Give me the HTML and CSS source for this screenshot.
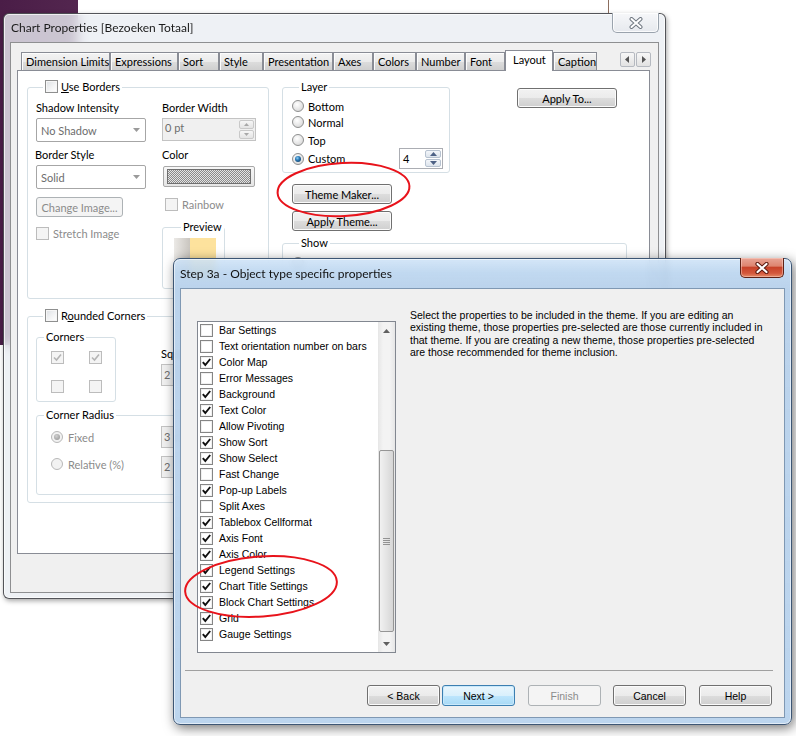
FILE: index.html
```html
<!DOCTYPE html>
<html>
<head>
<meta charset="utf-8">
<title>Chart Properties</title>
<link rel="stylesheet" href="styles.css">
</head>
<body>
<div class="wallpaper"></div>
<div class="hairline"></div>

<section class="win props">
  <header class="titlebar">
    <span class="title">Chart Properties [Bezoeken Totaal]</span>
    <span class="close inactive"><svg width="16" height="12" viewBox="0 0 16 12"><path d="M3.5 2 L12.5 10 M12.5 2 L3.5 10" stroke="#6f7780" stroke-width="4" stroke-linecap="round"/><path d="M3.5 2 L12.5 10 M12.5 2 L3.5 10" stroke="#fff" stroke-width="2" stroke-linecap="round"/></svg></span>
  </header>
  <div class="client">
    <nav class="tabs">
      <span class="tab t-dim">Dimension Limits</span>
      <span class="tab t-expr">Expressions</span>
      <span class="tab t-sort">Sort</span>
      <span class="tab t-style">Style</span>
      <span class="tab t-pres">Presentation</span>
      <span class="tab t-axes">Axes</span>
      <span class="tab t-colors">Colors</span>
      <span class="tab t-number">Number</span>
      <span class="tab t-font">Font</span>
      <span class="tab sel t-layout">Layout</span>
      <span class="tab t-caption">Caption</span>
      <span class="tabscroll">
        <span class="tsb"><svg width="5" height="7" viewBox="0 0 5 7"><path d="M4 0 L0 3.5 L4 7Z" fill="#555"/></svg></span>
        <span class="tsb"><svg width="5" height="7" viewBox="0 0 5 7"><path d="M1 0 L5 3.5 L1 7Z" fill="#555"/></svg></span>
      </span>
    </nav>
    <div class="page">
      <div class="lcol">
        <fieldset class="fs fs-borders">
          <legend><span class="cb"></span><span class="lg"><u>U</u>se Borders</span></legend>
          <div class="ub-grid">
            <div class="lbl">Shadow Intensity</div>
            <div class="lbl">Border Width</div>
            <div class="combo"><span class="ctext">No Shadow</span><svg class="carr" width="7" height="4" viewBox="0 0 7 4"><path d="M0 0 H7 L3.5 4Z" fill="#9a9a9a"/></svg></div>
            <div class="spin dis"><span class="stext">0 pt</span><span class="sbtns"><span class="sbtn"><svg width="5" height="3" viewBox="0 0 5 3"><path d="M0 3 L2.5 0 L5 3Z" fill="#a8a8a8"/></svg></span><span class="sbtn"><svg width="5" height="3" viewBox="0 0 5 3"><path d="M0 0 L2.5 3 L5 0Z" fill="#a8a8a8"/></svg></span></span></div>
            <div class="lbl">Border Style</div>
            <div class="lbl">Color</div>
            <div class="combo"><span class="ctext">Solid</span><svg class="carr" width="7" height="4" viewBox="0 0 7 4"><path d="M0 0 H7 L3.5 4Z" fill="#9a9a9a"/></svg></div>
            <div class="colorbtn"><span class="checker"></span></div>
            <div class="btn dis change-img">Change Image...</div>
            <div class="chk dis rainbow"><span class="cb dis"></span>Rainbow</div>
            <div class="chk dis"><span class="cb dis"></span>Stretch Image</div>
            <fieldset class="fs fs-preview">
              <legend><span class="lg">Preview</span></legend>
              <div class="swatch"><span class="sw-gray"></span><span class="sw-yellow"></span></div>
            </fieldset>
          </div>
        </fieldset>

        <fieldset class="fs fs-round">
          <legend><span class="cb"></span><span class="lg">R<u>o</u>unded Corners</span></legend>
          <div class="round-top">
            <fieldset class="fs fs-corners">
              <legend><span class="lg">Corners</span></legend>
              <div class="corner-grid">
                <span class="cb dis"><svg width="11" height="11" viewBox="0 0 11 11"><path d="M2 5.5 L4.5 8 L9 2.5" stroke="#b4b4b4" stroke-width="1.6" fill="none"/></svg></span>
                <span class="cb dis"><svg width="11" height="11" viewBox="0 0 11 11"><path d="M2 5.5 L4.5 8 L9 2.5" stroke="#b4b4b4" stroke-width="1.6" fill="none"/></svg></span>
                <span class="cb dis"></span>
                <span class="cb dis"></span>
              </div>
            </fieldset>
            <div class="sq">
              <div class="lbl">Squareness</div>
              <div class="edit dis">2</div>
            </div>
          </div>
          <fieldset class="fs fs-radius">
            <legend><span class="lg">Corner Radius</span></legend>
            <div class="radius-grid">
              <div class="rbl dis"><span class="rb on dis"></span>Fixed</div>
              <div class="edit dis">3 pt</div>
              <div class="rbl dis"><span class="rb dis"></span>Relative (%)</div>
              <div class="edit dis">2</div>
            </div>
          </fieldset>
        </fieldset>
      </div>

      <div class="rcol">
        <div class="layer-row">
          <fieldset class="fs fs-layer">
            <legend><span class="lg">Layer</span></legend>
            <div class="rbl r-bottom"><span class="rb"></span>Bottom</div>
            <div class="rbl r-normal"><span class="rb"></span>Normal</div>
            <div class="rbl r-top"><span class="rb"></span>Top</div>
            <div class="rbl r-custom"><span class="rb on"></span>Custom
              <div class="spin spin4"><span class="stext">4</span><span class="sbtns"><span class="sbtn"><svg width="7" height="4" viewBox="0 0 7 4"><path d="M0 4 L3.5 0 L7 4Z" fill="#4d6185"/></svg></span><span class="sbtn"><svg width="7" height="4" viewBox="0 0 7 4"><path d="M0 0 L3.5 4 L7 0Z" fill="#4d6185"/></svg></span></span></div>
            </div>
          </fieldset>
          <div class="btn apply-to">Apply To...</div>
        </div>
        <div class="btn theme-maker">Theme Maker...</div>
        <div class="btn apply-theme">Apply Theme...</div>
        <fieldset class="fs fs-show">
          <legend><span class="lg">Show</span></legend>
          <div class="r-always"><span class="rb"></span></div>
        </fieldset>
      </div>
    </div>
  </div>
</section>

<section class="win wiz">
  <header class="titlebar">
    <span class="title">Step 3a - Object type specific properties</span>
    <span class="close active"><svg width="16" height="12" viewBox="0 0 16 12"><path d="M3.5 2 L12.5 10 M12.5 2 L3.5 10" stroke="#5a1a10" stroke-width="4.2" stroke-linecap="round"/><path d="M3.5 2 L12.5 10 M12.5 2 L3.5 10" stroke="#fff" stroke-width="2.2" stroke-linecap="round"/></svg></span>
  </header>
  <div class="client">
    <div class="wiz-body">
      <div class="listbox">
        <div class="items">
          <div class="item"><span class="cb"></span>Bar Settings</div>
          <div class="item"><span class="cb"></span>Text orientation number on bars</div>
          <div class="item"><span class="cb"><svg width="11" height="11" viewBox="0 0 11 11"><path d="M1.8 5.2 L4.3 8 L9.2 2" stroke="#111" stroke-width="1.9" fill="none"/></svg></span>Color Map</div>
          <div class="item"><span class="cb"></span>Error Messages</div>
          <div class="item"><span class="cb"><svg width="11" height="11" viewBox="0 0 11 11"><path d="M1.8 5.2 L4.3 8 L9.2 2" stroke="#111" stroke-width="1.9" fill="none"/></svg></span>Background</div>
          <div class="item"><span class="cb"><svg width="11" height="11" viewBox="0 0 11 11"><path d="M1.8 5.2 L4.3 8 L9.2 2" stroke="#111" stroke-width="1.9" fill="none"/></svg></span>Text Color</div>
          <div class="item"><span class="cb"></span>Allow Pivoting</div>
          <div class="item"><span class="cb"><svg width="11" height="11" viewBox="0 0 11 11"><path d="M1.8 5.2 L4.3 8 L9.2 2" stroke="#111" stroke-width="1.9" fill="none"/></svg></span>Show Sort</div>
          <div class="item"><span class="cb"><svg width="11" height="11" viewBox="0 0 11 11"><path d="M1.8 5.2 L4.3 8 L9.2 2" stroke="#111" stroke-width="1.9" fill="none"/></svg></span>Show Select</div>
          <div class="item"><span class="cb"></span>Fast Change</div>
          <div class="item"><span class="cb"><svg width="11" height="11" viewBox="0 0 11 11"><path d="M1.8 5.2 L4.3 8 L9.2 2" stroke="#111" stroke-width="1.9" fill="none"/></svg></span>Pop-up Labels</div>
          <div class="item"><span class="cb"></span>Split Axes</div>
          <div class="item"><span class="cb"><svg width="11" height="11" viewBox="0 0 11 11"><path d="M1.8 5.2 L4.3 8 L9.2 2" stroke="#111" stroke-width="1.9" fill="none"/></svg></span>Tablebox Cellformat</div>
          <div class="item"><span class="cb"><svg width="11" height="11" viewBox="0 0 11 11"><path d="M1.8 5.2 L4.3 8 L9.2 2" stroke="#111" stroke-width="1.9" fill="none"/></svg></span>Axis Font</div>
          <div class="item"><span class="cb"><svg width="11" height="11" viewBox="0 0 11 11"><path d="M1.8 5.2 L4.3 8 L9.2 2" stroke="#111" stroke-width="1.9" fill="none"/></svg></span>Axis Color</div>
          <div class="item"><span class="cb"><svg width="11" height="11" viewBox="0 0 11 11"><path d="M1.8 5.2 L4.3 8 L9.2 2" stroke="#111" stroke-width="1.9" fill="none"/></svg></span>Legend Settings</div>
          <div class="item"><span class="cb"><svg width="11" height="11" viewBox="0 0 11 11"><path d="M1.8 5.2 L4.3 8 L9.2 2" stroke="#111" stroke-width="1.9" fill="none"/></svg></span>Chart Title Settings</div>
          <div class="item"><span class="cb"><svg width="11" height="11" viewBox="0 0 11 11"><path d="M1.8 5.2 L4.3 8 L9.2 2" stroke="#111" stroke-width="1.9" fill="none"/></svg></span>Block Chart Settings</div>
          <div class="item"><span class="cb"><svg width="11" height="11" viewBox="0 0 11 11"><path d="M1.8 5.2 L4.3 8 L9.2 2" stroke="#111" stroke-width="1.9" fill="none"/></svg></span>Grid</div>
          <div class="item"><span class="cb"><svg width="11" height="11" viewBox="0 0 11 11"><path d="M1.8 5.2 L4.3 8 L9.2 2" stroke="#111" stroke-width="1.9" fill="none"/></svg></span>Gauge Settings</div>
        </div>
        <div class="sb">
          <div class="sb-arrow"><svg width="7" height="4" viewBox="0 0 7 4"><path d="M0 4 L3.5 0 L7 4Z" fill="#606060"/></svg></div>
          <div class="sb-track"><div class="sb-thumb"><span class="grip"></span></div></div>
          <div class="sb-arrow"><svg width="7" height="4" viewBox="0 0 7 4"><path d="M0 0 L3.5 4 L7 0Z" fill="#606060"/></svg></div>
        </div>
      </div>
      <p class="desc">Select the properties to be included in the theme. If you are editing an<br>existing theme, those properties pre-selected are those currently included in<br>that theme. If you are creating a new theme, those properties pre-selected<br>are those recommended for theme inclusion.</p>
    </div>
    <div class="sep"></div>
    <div class="btnrow">
      <div class="btn wbtn">&lt; Back</div>
      <div class="btn wbtn focus">Next &gt;</div>
      <div class="btn wbtn dis finish">Finish</div>
      <div class="btn wbtn cancel">Cancel</div>
      <div class="btn wbtn">Help</div>
    </div>
  </div>
</section>

<svg class="marks" width="796" height="736" viewBox="0 0 796 736">
  <ellipse cx="343.5" cy="189.5" rx="66" ry="26.5" transform="rotate(-3 343.5 189.5)" fill="none" stroke="#e8131b" stroke-width="2"/>
  <ellipse cx="261" cy="586.5" rx="76" ry="30" transform="rotate(-4 261 586.5)" fill="none" stroke="#e8131b" stroke-width="2"/>
</svg>
</body>
</html>
```

FILE: styles.css
```css
* { box-sizing: border-box; }

body {
  margin: 0;
  width: 796px;
  height: 736px;
  overflow: hidden;
  position: relative;
  background: #ffffff;
  font-family: "Lato", "Liberation Sans", Arial, sans-serif;
  font-size: 11px;
  color: #000;
}

.wallpaper {
  position: absolute;
  left: 0;
  top: 0;
  width: 78px;
  height: 345px;
  background: linear-gradient(90deg, #4a1d47 0%, #53264f 100%);
}

.hairline {
  position: absolute;
  left: 608px;
  top: 0;
  width: 1px;
  height: 14px;
  background: #8c6e5e;
}

/* ---------- windows ---------- */
.win {
  position: absolute;
  display: flex;
  flex-direction: column;
}

.titlebar {
  flex: none;
  display: flex;
  align-items: center;
  font-size: 12px;
  white-space: nowrap;
}

.close {
  margin-left: auto;
  align-self: flex-start;
  margin-top: -1px;
  height: 20px;
  border-radius: 0 0 5px 5px;
  display: flex;
  align-items: center;
  justify-content: center;
}

.close.inactive {
  width: 47px;
  margin-right: 6px;
  border: 1px solid #9aa3ad;
  border-top: none;
  background: linear-gradient(#f6f7f9, #e6e9ee);
  box-shadow: inset 0 0 0 1px rgba(255,255,255,.8);
}

.close.active {
  width: 44px;
  margin-right: 7px;
  border: 1px solid #5e2216;
  border-top: none;
  background: linear-gradient(#e8a596 0%, #de8570 42%, #c8432a 50%, #d3583c 80%, #e48b67 100%);
  box-shadow: inset 0 0 0 1px rgba(255,220,210,.45);
}

/* Chart properties window */
.props {
  left: 3px;
  top: 13px;
  width: 663px;
  height: 586px;
  border: 1px solid rgba(45,45,50,.8);
  border-radius: 6px;
  background: rgba(234,237,242,.8);
  backdrop-filter: blur(6px);
  box-shadow: 1px 2px 5px rgba(0,0,0,.35), inset 0 0 0 1px rgba(255,255,255,.7);
}

.props .titlebar {
  height: 28px;
  padding-left: 7px;
}

.props .title { margin-top: -1px; color: #1b1b1b; }

.props .client {
  margin: 0 6px;
  height: 551px;
  border: 1px solid #8e8f91;
  background: #f0f0f0;
  padding: 7px 0 0 6px;
}

/* tabs */
.tabs {
  display: flex;
  align-items: flex-end;
  height: 20px;
  width: 633px;
  padding-left: 4px;
}

.tab {
  height: 18px;
  border: 1px solid #898c95;
  border-bottom: none;
  background: linear-gradient(#f3f3f3 0%, #ebebeb 50%, #dddddd 51%, #cfcfcf 100%);
  box-shadow: inset 1px 1px 0 #fcfcfc;
  padding-left: 4px;
  line-height: 17px;
  white-space: nowrap;
}
.t-dim { width: 89px; }
.t-expr { width: 68px; }
.t-sort { width: 41px; }
.t-style { width: 44px; }
.t-pres { width: 70px; }
.t-axes { width: 40px; }
.t-colors { width: 43px; }
.t-number { width: 49px; }
.t-font { width: 40px; }
.t-layout { width: 48px; }
.t-caption { width: 44px; }

.tab.sel {
  height: 21px;
  margin-bottom: -1px;
  position: relative;
  z-index: 1;
  background: #fff;
  box-shadow: none;
  padding-left: 7px;
  line-height: 18px;
}

.tabscroll {
  margin-left: auto;
  margin-right: -1px;
  align-self: flex-start;
  margin-top: 2px;
  display: flex;
  gap: 1px;
}
.tsb {
  width: 15px;
  height: 15px;
  border: 1px solid #b5b9c0;
  border-radius: 2px;
  background: linear-gradient(#f7f7f7, #e2e2e2);
  display: flex;
  align-items: center;
  justify-content: center;
}

.page {
  width: 633px;
  height: 484px;
  border: 1px solid #898c95;
  background: #fff;
  display: grid;
  grid-template-columns: 242px 345px;
  column-gap: 13px;
  align-content: start;
  align-items: start;
  padding: 9px 0 0 9px;
}

/* fieldsets */
.fs {
  margin: 0;
  padding: 0;
  border: 1px solid #d5dfe5;
  border-radius: 3px;
  min-width: 0;
}
.fs legend {
  padding: 0 2px;
  margin-left: 7px;
  height: 14px;
  line-height: 14px;
  white-space: nowrap;
}
.fs legend .cb { vertical-align: -2px; margin-right: 3px; }
.lg { line-height: 14px; }

/* checkboxes & radios */
.cb {
  display: inline-flex;
  align-items: center;
  justify-content: center;
  flex: none;
  width: 13px;
  height: 13px;
  border: 1px solid #8e8f8f;
  background: linear-gradient(135deg, #dcdfe3 0%, #f4f5f6 60%, #ffffff 100%);
  box-shadow: inset 0 0 0 1px #f6f6f6;
}
.cb.dis {
  border-color: #bcbcbc;
  background: #f4f4f4;
  box-shadow: none;
}

.rb {
  display: inline-block;
  flex: none;
  width: 12px;
  height: 12px;
  border-radius: 50%;
  border: 1px solid #8e8f8f;
  background: radial-gradient(circle at 40% 35%, #ffffff 0%, #eaeaea 45%, #cfcfcf 100%);
  position: relative;
}
.rb.on::after {
  content: "";
  position: absolute;
  left: 2px;
  top: 2px;
  width: 6px;
  height: 6px;
  border-radius: 50%;
  background: radial-gradient(circle at 40% 35%, #8fd0f5 0%, #2a78b4 40%, #0c2f52 100%);
}
.rb.dis { border-color: #b8b8b8; background: #f2f2f2; }
.rb.on.dis::after { background: radial-gradient(circle at 40% 35%, #d0d0d0, #8f8f8f); }

.rbl {
  display: flex;
  align-items: center;
  gap: 4px;
  height: 14px;
  white-space: nowrap;
}
.rbl.dis, .chk.dis { color: #8b8b8b; }

.chk {
  display: flex;
  align-items: center;
  gap: 4px;
  height: 13px;
  white-space: nowrap;
}

/* buttons */
.btn {
  display: flex;
  align-items: center;
  justify-content: center;
  height: 20px;
  border: 1px solid #707070;
  border-radius: 3px;
  background: linear-gradient(#f2f2f2 0%, #ebebeb 50%, #dddddd 51%, #cfcfcf 100%);
  box-shadow: inset 0 0 0 1px #fbfbfb;
  white-space: nowrap;
}
.btn.dis {
  border-color: #adb2b5;
  background: #f4f4f4;
  box-shadow: none;
  color: #8b8b8b;
}

/* controls */
.lbl { line-height: 14px; white-space: nowrap; }

.combo {
  width: 110px;
  height: 24px;
  border: 1px solid #a6a6a6;
  border-radius: 2px;
  background: #fff;
  display: flex;
  align-items: center;
  padding-left: 4px;
  color: #6d6d6d;
}
.carr { margin-left: auto; margin-right: 5px; }

.spin {
  display: flex;
  align-items: stretch;
  background: #fff;
  border: 1px solid #abadb3;
}
.spin.dis {
  width: 94px;
  height: 23px;
  background: #f0f0f0;
  border-color: #c3c3c3;
  color: #6d6d6d;
}
.stext { padding: 2px 0 0 2px; flex: 1; }
.sbtns {
  width: 16px;
  display: flex;
  flex-direction: column;
  gap: 1px;
  padding: 1px 1px 1px 0;
}
.sbtn {
  flex: 1;
  display: flex;
  align-items: center;
  justify-content: center;
  border: 1px solid #c9c9c9;
  border-radius: 2px;
  background: linear-gradient(#f6f6f6, #e4e4e4);
}

.colorbtn {
  width: 92px;
  height: 21px;
  margin: 1px 0 0 1px;
  border: 1px solid #a8a8a8;
  border-radius: 2px;
  background: linear-gradient(#f7f7f7, #e5e5e5);
  padding: 2px 3px;
  display: flex;
}
.checker {
  flex: 1;
  border: 1px solid #6f6f6f;
  background: repeating-conic-gradient(#8a8a8a 0 25%, #e4e4e4 0 50%) 0 0 / 2px 2px;
}

.edit {
  width: 90px;
  height: 22px;
  border: 1px solid #abadb3;
  background: #fff;
  padding: 3px 0 0 2px;
}
.edit.dis { background: #f0f0f0; border-color: #c3c3c3; color: #6d6d6d; }

/* left column */
.lcol { display: flex; flex-direction: column; }

.fs-borders { height: 219px; padding: 0 0 0 8px; }
.ub-grid {
  display: grid;
  grid-template-columns: 126px 94px;
  grid-template-rows: 17px 30px 17px 32px 30px auto;
  align-items: start;
  padding-top: 7px;
}
.ub-grid > .lbl:nth-child(5) { margin-left: -1px; }
.change-img { width: 87px; height: 20px; }
.rainbow { margin: 1px 0 0 3px; }
.fs-preview {
  width: 63px;
  height: 69px;
  margin-top: -7px;
  padding: 0 0 0 11px;
}
.swatch { display: flex; margin-top: 4px; width: 42px; height: 40px; }
.sw-gray { width: 16px; background: linear-gradient(90deg, #ebe9e6, #c9c5bf); }
.sw-yellow { flex: 1; background: #fde29d; }

.fs-round {
  margin-top: 10px;
  height: 194px;
  padding: 0 0 0 8px;
}
.round-top { display: flex; padding-top: 7px; align-items: flex-start; }
.fs-corners { width: 80px; height: 72px; padding: 0; }
.corner-grid {
  display: grid;
  grid-template-columns: 38px 13px;
  grid-template-rows: 29px 13px;
  padding: 7px 0 0 14px;
}
.sq { margin-left: 45px; padding-top: 17px; }
.sq .edit { margin-top: 3px; }

.fs-radius {
  width: 226px;
  height: 87px;
  margin-top: 6px;
  padding: 0;
}
.radius-grid {
  display: grid;
  grid-template-columns: 110px 90px;
  grid-template-rows: 30px 22px;
  align-items: start;
  padding: 4px 0 0 14px;
}
.radius-grid .rbl { margin-top: 4px; gap: 5px; }
.radius-grid .rbl:nth-of-type(3) { margin-top: 1px; }

/* right column */
.rcol { display: flex; flex-direction: column; align-items: flex-start; }
.layer-row { display: flex; align-items: flex-start; }
.fs-layer { width: 168px; height: 93px; padding: 0 0 0 9px; }
.r-bottom { margin-top: 5px; }
.r-normal { margin-top: 2px; }
.r-top { margin-top: 4px; }
.r-custom { margin-top: 1px; height: 21px; }
.spin4 {
  margin-left: auto;
  margin-right: 6px;
  width: 44px;
  height: 21px;
  border-color: #abadb3;
}
.spin4 .stext { padding: 3px 0 0 3px; }
.spin4 .sbtns { width: 17px; }
.spin4 .sbtn { border-color: #b7c2d0; background: linear-gradient(#f3f6fa, #dde4ec); }

.apply-to { width: 100px; margin: 8px 0 0 67px; }
.theme-maker { width: 100px; margin: 11px 0 0 10px; }
.apply-theme { width: 100px; margin: 7px 0 0 10px; }
.fs-show { width: 345px; height: 230px; margin-top: 5px; padding: 0 0 0 9px; }
.r-always { margin-top: 6px; height: 14px; display: flex; align-items: center; }

/* ---------- wizard window ---------- */
.wiz {
  left: 173px;
  top: 258px;
  width: 619px;
  height: 467px;
  border: 1px solid #3d5674;
  border-radius: 7px;
  background: linear-gradient(180deg, rgba(205,226,247,.85) 0px, rgba(184,211,238,.88) 14px, rgba(181,207,234,.92) 30px, #bcd5ee 100%);
  backdrop-filter: blur(3px);
  box-shadow: 2px 3px 12px rgba(0,0,0,.55), inset 0 0 0 1px rgba(255,255,255,.55);
}
.wiz .titlebar {
  height: 29px;
  padding-left: 6px;
}
.wiz .title { margin-top: -1px; color: #111; }

.wiz .client {
  margin: 0 6px;
  height: 430px;
  border: 1px solid #7f98b3;
  background: #f0f0f0;
  display: flex;
  flex-direction: column;
  font-family: "Liberation Sans", Arial, sans-serif;
  font-size: 10.5px;
}

.wiz-body { display: flex; align-items: flex-start; }

.listbox {
  margin: 32px 0 0 16px;
  width: 199px;
  height: 332px;
  border: 1px solid #828790;
  background: #fff;
  display: flex;
}
.items { flex: 1; padding-left: 2px; }
.item {
  height: 16px;
  display: flex;
  align-items: center;
  gap: 6px;
  white-space: nowrap;
  color: #000;
}
.item .cb {
  border-color: #858585;
  background: #fff;
  box-shadow: inset 0 0 0 1px #f0f0f0;
}

.sb {
  width: 17px;
  display: flex;
  flex-direction: column;
  background: linear-gradient(90deg, #e6e6e6, #f3f3f3 30%, #f3f3f3 70%, #e6e6e6);
}
.sb-arrow {
  height: 17px;
  display: flex;
  align-items: center;
  justify-content: center;
}
.sb-track { flex: 1; padding: 111px 1px 0 1px; }
.sb-thumb {
  height: 182px;
  border: 1px solid #959595;
  border-radius: 2px;
  background: linear-gradient(90deg, #f1f1f1, #e4e4e4 50%, #d6d6d6);
  display: flex;
  align-items: center;
  justify-content: center;
}
.grip {
  width: 7px;
  height: 7px;
  background: repeating-linear-gradient(#6f6f6f 0 1px, transparent 1px 2px);
  opacity: .7;
}

.desc {
  margin: 20px 0 0 14px;
  line-height: 12.3px;
  white-space: nowrap;
}

.sep {
  margin: 17px 0 0 4px;
  width: 588px;
  height: 1px;
  background: #a0a0a0;
}

.btnrow {
  display: flex;
  margin: 14px 0 0 186px;
}
.wbtn { width: 73px; height: 21px; }
.wbtn + .wbtn { margin-left: 2px; }
.wbtn.finish { margin-left: 13px; }
.wbtn.cancel { margin-left: 12px; }
.wbtn:last-child { margin-left: 13px; }
.wbtn.focus {
  border-color: #3c7fb1;
  background: linear-gradient(#eaf6fd 0%, #d9f0fc 50%, #bee6fd 51%, #a7d9f5 100%);
  box-shadow: inset 0 0 0 1px #c9e9fb;
}

/* annotations */
.marks {
  position: absolute;
  left: 0;
  top: 0;
  pointer-events: none;
}
```
